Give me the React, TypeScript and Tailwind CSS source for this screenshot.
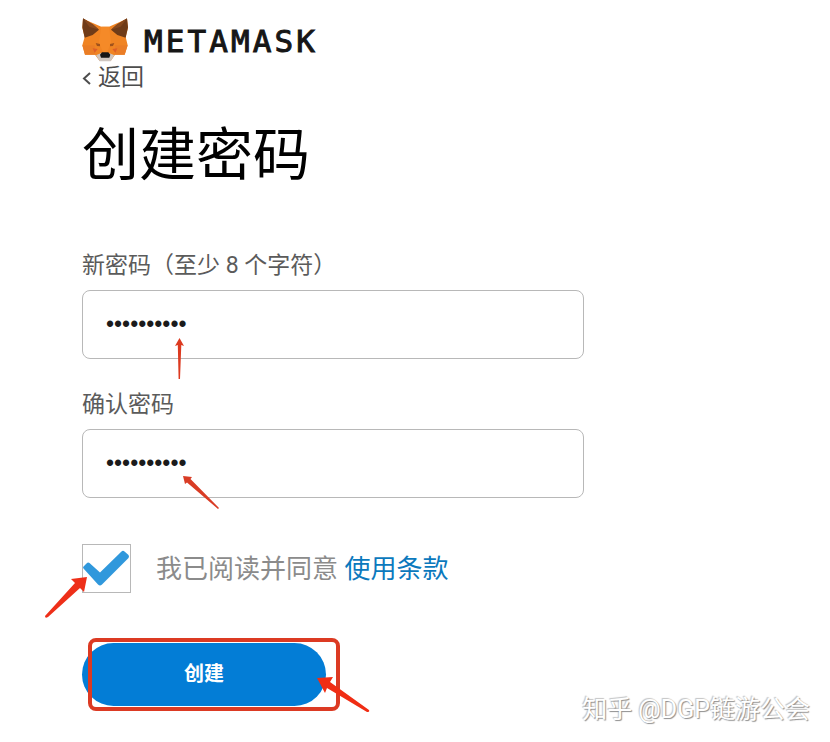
import React, { useState } from 'react';

interface PasswordFieldProps {
  id: string;
  label: string;
  value: string;
  onChange: (value: string) => void;
  children?: React.ReactNode;
}

const FoxLogo: React.FC = () => (
  <svg viewBox="6 12 138 132" className="h-11 w-[46px]" aria-hidden>
    <path d="M9 14L64 38H87L141 14L144 42L137 69L143 94L134 122L105 122L92 141H59L45 122L15 122L7 94L14 69L7 42Z" fill="#f08423" />
    <path d="M64 38L57 84L70 118H81L93 84L87 38Z" fill="#f58a28" />
    <path d="M7 94H44L45 122L15 122ZM143 94H106L105 122L134 122Z" fill="#ea7d26" />
    <path d="M9 13L40 32L57 47L38 63L14 71L7 40ZM141 13L110 32L93 47L112 63L137 71L144 40Z" fill="#6f3b18" />
    <path d="M9 13L40 32L57 47L28 38ZM141 13L110 32L93 47L122 38Z" fill="#87481d" />
    <path d="M47 87L60 90V97L51 96ZM103 87L90 90V97L99 96Z" fill="#a0521c" />
    <path d="M38 103L53 105L44 116ZM112 103L97 105L106 116Z" fill="#dd5f29" />
    <path d="M48 124L64 117H87L103 124L92 142H59Z" fill="#cfc6c0" />
    <path d="M66 115H85L91 122L88 131H63L60 122Z" fill="#161616" />
  </svg>
);

const PasswordField: React.FC<PasswordFieldProps> = ({ id, label, value, onChange, children }) => (
  <div>
    <label htmlFor={id} className="block text-[23px] leading-8 text-[#5b5b5b]">
      {label}
    </label>
    <div className="relative mt-2">
      <input
        id={id}
        type="password"
        value={value}
        onChange={(e) => onChange(e.target.value)}
        className="block h-[69px] w-full rounded-lg border border-[#b8b8b8] bg-white px-[23px] font-['Liberation_Sans',sans-serif] text-[23px] text-[#1b1b1b] outline-none"
      />
      {children}
    </div>
  </div>
);

export default function App() {
  const [password, setPassword] = useState('metamask88');
  const [confirm, setConfirm] = useState('metamask88');
  const [accepted, setAccepted] = useState(true);

  return (
    <main className="relative min-h-screen bg-white px-[82px] pt-[18px] pb-8 font-[Roboto,'Noto_Sans_CJK_SC',sans-serif]">
      <header>
        <div className="flex h-11 items-center gap-4">
          <FoxLogo />
          <span className="pt-0.5 font-['DejaVu_Sans_Mono',monospace] text-[31px] leading-10 tracking-widest text-[#161616] [-webkit-text-stroke:1px_#161616]">
            METAMASK
          </span>
        </div>
        <a href="#back" className="flex h-8 w-fit items-center gap-1 text-[23px] leading-8 text-[#4d4d4d]">
          <svg viewBox="0 0 12 16" className="h-4 w-3" fill="none" stroke="currentColor" strokeWidth="2" aria-hidden>
            <path d="M8 3L2 8.500L8 14" />
          </svg>
          返回
        </a>
      </header>

      <h1 className="mt-5 text-[57px] leading-[84px] text-black">创建密码</h1>

      <form className="mt-[52px]" onSubmit={(e) => e.preventDefault()}>
        <div className="flex max-w-[502px] flex-col gap-[30px]">
          <PasswordField id="new-password" label="新密码（至少 8 个字符）" value={password} onChange={setPassword}>
            <svg viewBox="0 0 12 42" className="pointer-events-none absolute top-12 left-[92px] h-[42px] w-3" aria-hidden>
              <path d="M5.500 0L10 8L7.300 7L6 41H4.600L3.800 7L1 8Z" fill="#dc3a20" />
            </svg>
          </PasswordField>
          <PasswordField id="confirm-password" label="确认密码" value={confirm} onChange={setConfirm}>
            <svg viewBox="0 0 38 36" className="pointer-events-none absolute top-[46px] left-[100px] h-9 w-[38px]" aria-hidden>
              <path d="M1 1L10 2L8.500 4L37 33L36 34L5 7.500L3 9Z" fill="#d93c25" />
            </svg>
          </PasswordField>
        </div>

        <div className="mt-[46px] flex items-center">
          <div className="relative size-[49px]">
            <input
              id="terms"
              type="checkbox"
              checked={accepted}
              onChange={(e) => setAccepted(e.target.checked)}
              className="peer block size-full appearance-none border border-[#b8b8b8] bg-white"
            />
            <svg viewBox="0 0 49 49" className="pointer-events-none absolute inset-0 hidden peer-checked:block" aria-hidden>
              <path d="M1.500 24.500Q.500 23.500 1.500 22.500L4.500 19.500Q6 18 7.500 19L18 28.500L39.500 7.500Q41 6 42.500 7.500L46.500 11Q47.500 12.500 46.500 14L20 40.500Q18 42.500 16 40.500Z" fill="#3098dc" />
            </svg>
            <svg viewBox="0 0 46 44" className="pointer-events-none absolute top-[31px] -left-[38px] h-11 w-[46px]" aria-hidden>
              <path d="M43 2L40 17L36 13L4 42Q1 44 1 41L31 8L27 4Z" fill="#ee2f19" />
            </svg>
          </div>
          <label htmlFor="terms" className="ml-[25px] text-[26px] leading-9 text-[#8b8b8b]">
            我已阅读并同意{' '}
            <a href="#terms" className="text-[#0b79bd]">
              使用条款
            </a>
          </label>
        </div>

        <div className="relative mt-[50px] w-[244px]">
          <button type="submit" className="block h-[63px] w-full rounded-full bg-[#037dd6] pb-0.5 text-xl font-bold text-white">
            创建
          </button>
          {/* Highlight frame and pointer over the submit button */}
          <div className="pointer-events-none absolute -inset-y-[5px] -right-[14px] left-[6px] rounded-lg border-4 border-[#dc3a23]" />
          <svg viewBox="0 0 56 38" className="pointer-events-none absolute top-[33px] left-[234px] h-[38px] w-14" aria-hidden>
            <path d="M1 2L17 1L14 6L53 34Q54 36 51 36L11 12L9 17Z" fill="#f02d14" />
          </svg>
        </div>
      </form>

      <p className="pointer-events-none absolute right-5 bottom-3.5 text-[25px] leading-9 text-white [text-shadow:1px_1px_1px_#8f8f8f,-1px_-1px_1px_#c5c5c5]">
        知乎 @DGP链游公会
      </p>
    </main>
  );
}
